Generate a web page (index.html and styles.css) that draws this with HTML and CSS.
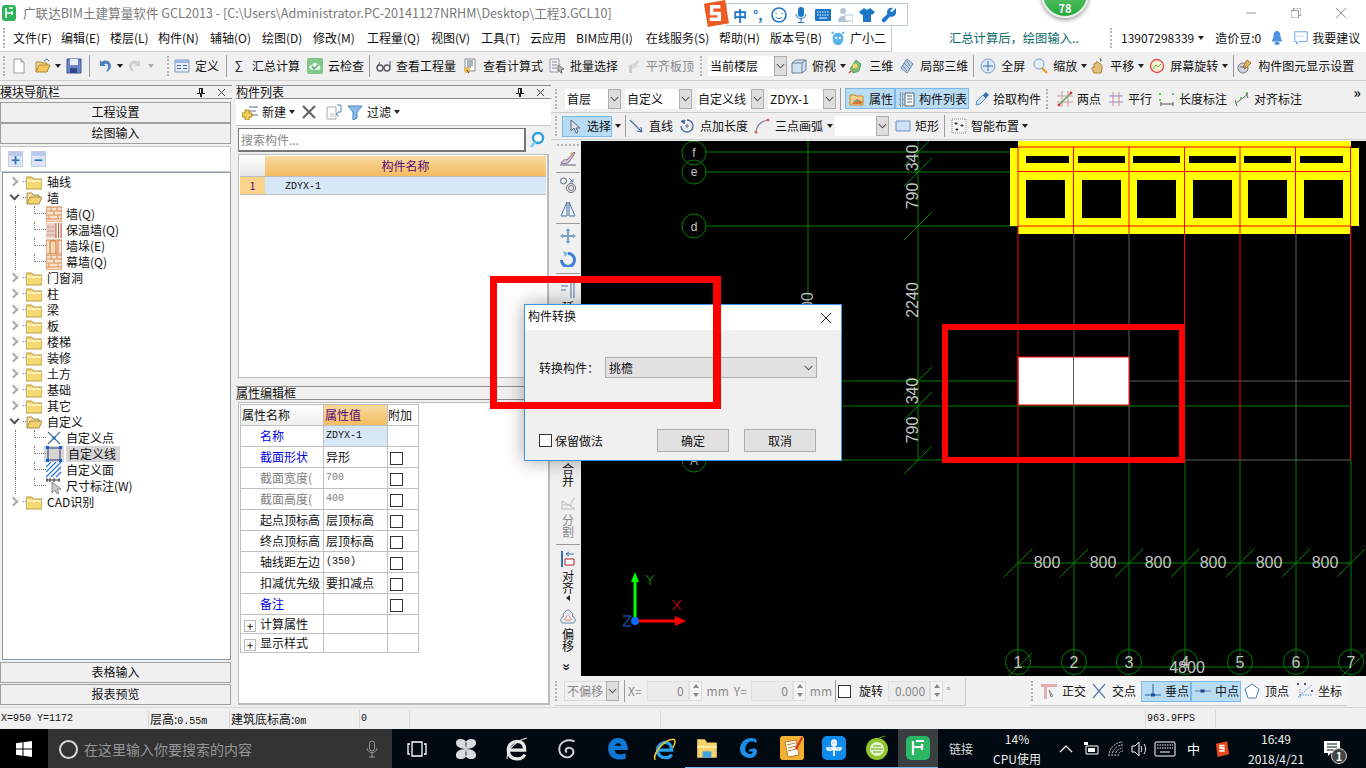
FILE: index.html
```html
<!DOCTYPE html>
<html lang="zh">
<head>
<meta charset="utf-8">
<title>广联达BIM土建算量软件 GCL2013</title>
<link rel="stylesheet" href="styles.css">
</head>
<body>
<svg class="sprite" xmlns="http://www.w3.org/2000/svg">
<symbol id="new" viewBox="0 0 16 16"><path d="M3 1h7l3 3v11H3z" fill="#fff" stroke="#9a9a9a"/><path d="M10 1v3h3" fill="#ddd" stroke="#9a9a9a"/></symbol>
<symbol id="open" viewBox="0 0 16 16"><path d="M1 14V4h5l1 1h5v2" fill="#f0d98a" stroke="#a88a3a"/><path d="M1 14l3-7h11l-3 7z" fill="#f6c55a" stroke="#a88a3a"/><path d="M9 3l3-2 2 2" fill="none" stroke="#3a7ac0"/></symbol>
<symbol id="save" viewBox="0 0 16 16"><path d="M1 1h14v14H1z" fill="#6a86c8" stroke="#3f558f"/><path d="M4 1h8v6H4z" fill="#e8eefa"/><path d="M4 10h7v5H4z" fill="#2f4a8a"/></symbol>
<symbol id="undo" viewBox="0 0 16 16"><path d="M3 2v6h6L7 6c3-1 5 1 4 4l-2 4c5-2 6-6 4-9-2-3-6-3-8-1z" fill="#4a7fc4"/></symbol>
<symbol id="redo" viewBox="0 0 16 16"><path d="M13 2v6H7l2-2c-3-1-5 1-4 4l2 4c-5-2-6-6-4-9 2-3 6-3 8-1z" fill="#cfcfcf"/></symbol>
<symbol id="def" viewBox="0 0 16 16"><path d="M1 2h14v12H1z" fill="#e6eefa" stroke="#7a96c0"/><path d="M1 2h14v3H1z" fill="#9ab6dc"/><path d="M3 7h4v1H3zM3 10h4v1H3zM9 7h4v1H9zM9 10h4v1H9z" fill="#44658f"/></symbol>
<symbol id="cloud" viewBox="0 0 16 16"><rect width="16" height="16" rx="2" fill="#7fc88a"/><path d="M3 11c-2-2 0-4 2-4 1-3 5-3 6 0 3 0 3 4 1 5H4z" fill="#e6f5e8"/><path d="M5 8l2 3 4-4" fill="none" stroke="#5ab26a" stroke-width="1.6"/></symbol>
<symbol id="glass" viewBox="0 0 16 16"><circle cx="5" cy="10" r="3" fill="none" stroke="#556" stroke-width="1.4"/><circle cx="12" cy="10" r="3" fill="none" stroke="#556" stroke-width="1.4"/><path d="M2 9l3-5M15 9V3" stroke="#556" fill="none"/></symbol>
<symbol id="calc" viewBox="0 0 16 16"><path d="M3 1h10v12H3z" fill="#fff" stroke="#889"/><path d="M5 3h6M5 5h6M5 7h6M5 9h4" stroke="#567"/><circle cx="5" cy="12" r="3" fill="#f0b84a"/><path d="M5 12l2 3" stroke="#456"/></symbol>
<symbol id="batch" viewBox="0 0 16 16"><path d="M1 1h9v13H1z" fill="#f4f4f4" stroke="#99a"/><path d="M3 4h5M3 7h5M3 10h5" stroke="#789"/><path d="M9 7l6 4-3 1 1 3-1 0-2-3-1 1z" fill="#bbb" stroke="#777"/></symbol>
<symbol id="flat" viewBox="0 0 16 16"><path d="M2 8l6-3 6 3-6 3z" fill="#ddd"/><path d="M4 15V9l3-2v8zM9 6l4-4 1 2-4 4z" fill="#ccc"/></symbol>
<symbol id="top" viewBox="0 0 16 16"><path d="M1 5l4-3h10v10l-4 3H1z" fill="#cfe0ef" stroke="#6b8299"/><path d="M1 5h10v10M11 5l4-3" fill="none" stroke="#6b8299"/></symbol>
<symbol id="d3" viewBox="0 0 16 16"><path d="M8 2l5 4-2 7-6 2-3-4z" fill="#7fb86e" stroke="#5a7"/><circle cx="7" cy="8" r="2.5" fill="#f1d66a"/><path d="M3 13l-2 2" stroke="#d33" stroke-width="1.5"/></symbol>
<symbol id="d3p" viewBox="0 0 16 16"><path d="M8 1l6 5-6 9-6-5z" fill="#c4d4e8" stroke="#6a86a8"/><path d="M5 5l6 6M8 3l3 5M4 8l4 5" stroke="#6a86a8"/></symbol>
<symbol id="full" viewBox="0 0 16 16"><circle cx="8" cy="8" r="7" fill="#dce8f6" stroke="#7a9bc4"/><path d="M8 3v10M3 8h10" stroke="#3f6fae"/></symbol>
<symbol id="zoom" viewBox="0 0 16 16"><circle cx="7" cy="6" r="5" fill="#e8f0fa" stroke="#7a9bc4"/><path d="M10 10l5 5" stroke="#e0a030" stroke-width="2.4"/></symbol>
<symbol id="pan" viewBox="0 0 16 16"><path d="M5 15c-2-3-3-6-1-6l1 1V6c1-2 2 0 2 0V4c1-1 2 0 2 0l1 1 1 1c1 0 2 1 2 2v3l-1 4z" fill="#e0c07a" stroke="#a88a3a"/><path d="M11 0l2 2-2 2z" fill="#567"/></symbol>
<symbol id="rot" viewBox="0 0 16 16"><circle cx="8" cy="8" r="6.5" fill="#fdf6d0" stroke="#e05050" stroke-width="1.4"/><path d="M4 11l3-4 2 2 3-3" stroke="#5aa860" fill="none"/></symbol>
<symbol id="disp" viewBox="0 0 16 16"><circle cx="6" cy="10" r="5" fill="#cdd6e2" stroke="#778"/><path d="M10 2l4 3-6 6-2-2z" fill="#e6b25a" stroke="#a0752a"/><path d="M3 9h6" stroke="#777"/></symbol>
<symbol id="prop" viewBox="0 0 16 16"><path d="M1 4h5l1 1h7v9H1z" fill="#f6d28a" stroke="#b98a2a"/><path d="M3 13l5-5 6 3-2 2z" fill="#e07030"/><path d="M4 10h8" stroke="#5a9"/></symbol>
<symbol id="list" viewBox="0 0 16 16"><path d="M1 2h3v3H1zM1 7h3v3H1zM1 12h3v3H1z" fill="none" stroke="#567" stroke-dasharray="1 1"/><path d="M6 2h9v13H6z" fill="#fff" stroke="#567"/><path d="M8 5h5M8 8h5M8 11h5" stroke="#567"/></symbol>
<symbol id="pick" viewBox="0 0 16 16"><path d="M2 14l1-4 6-6 3 3-6 6z" fill="#cfe4f5" stroke="#5a88ba"/><path d="M9 4l3-3 3 3-3 3z" fill="#3f6fae"/></symbol>
<symbol id="two" viewBox="0 0 16 16"><path d="M0 5h16M0 11h16M5 0v16M11 0v16" stroke="#c8a0a0" fill="none"/><path d="M2 14L14 2" stroke="#60a060" stroke-width="1.2"/><circle cx="2" cy="14" r="1.4" fill="#d33"/><circle cx="14" cy="2" r="1.4" fill="#d33"/></symbol>
<symbol id="par" viewBox="0 0 16 16"><path d="M1 5h14M1 11h14" stroke="#8a90c8"/><path d="M5 1v14M11 1v14" stroke="#d08a8a"/></symbol>
<symbol id="dim" viewBox="0 0 16 16"><path d="M2 11v4M14 11v4M2 13h12" stroke="#555"/><path d="M0 2h2v2H0zM0 8h2v2H0zM13 2h2v2h-2z" fill="#6bbf6b"/></symbol>
<symbol id="alg" viewBox="0 0 16 16"><path d="M1 13L14 3M3 15L1 9M14 7l-2-5" stroke="#666" fill="none"/><path d="M1 11h2v2H1zM12 1h2v2h-2zM6 6h2v2H6z" fill="#6bbf6b"/></symbol>
<symbol id="sel" viewBox="0 0 16 16"><path d="M5 2v11l3-3 2 5 2-1-2-4h4z" fill="#d9e2ee" stroke="#667"/></symbol>
<symbol id="line" viewBox="0 0 16 16"><path d="M2 2l12 12M14 14l-5-1M14 14l-1-5" stroke="#4d70a4" stroke-width="1.2" fill="none"/></symbol>
<symbol id="ptl" viewBox="0 0 16 16"><path d="M8 2a6 6 0 1 1-6 6" fill="none" stroke="#4f6f9f" stroke-width="1.4"/><path d="M2 3l3 3 1-4zM8 6v4M6 8h4" fill="#4f6f9f" stroke="#4f6f9f"/></symbol>
<symbol id="arc" viewBox="0 0 16 16"><path d="M2 14C3 7 7 3 14 2" fill="none" stroke="#7a8aa0" stroke-width="1.2"/><circle cx="2" cy="14" r="1.6" fill="#e06a5a"/><circle cx="14" cy="2" r="1.6" fill="#e06a5a"/></symbol>
<symbol id="rect" viewBox="0 0 16 16"><path d="M1 3h14v10H1z" fill="#cfe0f7" stroke="#6f8fc8"/></symbol>
<symbol id="smart" viewBox="0 0 16 16"><path d="M1 1h14v14H1z" fill="#f6f6f6" stroke="#8a8a8a" stroke-dasharray="1 1"/><path d="M5 4v3M3.500 5.500h3M11 6v3M9.500 7.500h3M6 10v3M4.500 11.500h3" stroke="#334"/></symbol>
<symbol id="add" viewBox="0 0 16 16"><path d="M7 3h9M7 7h7M7 11h9" stroke="#5a6f90"/><path d="M3 6h4v3h3v4H7v3H3v-3H0V9h3z" fill="#f0d060" stroke="#b08a20"/></symbol>
<symbol id="copy" viewBox="0 0 16 16"><path d="M1 3h9v12H1z" fill="#fff" stroke="#a8a8a8"/><path d="M4 9h6v4H4z" fill="#e2e2e2"/><path d="M11 1h4v7h-3M13 8l-3 2 3 2" fill="none" stroke="#5a86c0"/></symbol>
<symbol id="filter" viewBox="0 0 16 16"><path d="M1 2h14L10 8v6l-4 2V8z" fill="#8fb9e8" stroke="#4a84c4"/></symbol>
<symbol id="find" viewBox="0 0 16 16"><circle cx="9" cy="6" r="5" fill="#fff" stroke="#2f9fdc" stroke-width="2.4"/><path d="M6 10l-4 5" stroke="#8acdf0" stroke-width="3"/></symbol>
<symbol id="fc" viewBox="0 0 16 16"><path d="M0 3h6l1 2h9v10H0z" fill="#f7d774" stroke="#b69a50"/><path d="M1 6h14v2H1z" fill="#fff2b8"/></symbol>
<symbol id="fo" viewBox="0 0 16 16"><path d="M1 14V3h5l1 2h6v2" fill="#f4e1a0" stroke="#a68a4a"/><path d="M1 14l3-7h12l-3 7z" fill="#f6d36a" stroke="#a68a4a"/></symbol>
<symbol id="brick" viewBox="0 0 16 16"><path d="M0 1h16v15H0z" fill="#fbe4cf" stroke="#d07a40"/><path d="M0 5h16M0 9h16M0 13h16M5 1v4M11 1v4M8 5v4M3 9v4M12 9v4" stroke="#d88a55"/></symbol>
<symbol id="ins" viewBox="0 0 16 16"><path d="M0 1h16v15H0z" fill="#eacdc4"/><path d="M10 1h5v15h-5z" fill="#fff"/><path d="M10 1v15M15 1v15M12.500 1v15" stroke="#c05030"/><path d="M1 5h8M1 9h8M1 13h8" stroke="#c9a095"/></symbol>
<symbol id="pier" viewBox="0 0 16 16"><path d="M0 2h16v14H0z" fill="#fbe4cf" stroke="#d07a40"/><path d="M4 3h6v13H4z" fill="#f8d6ae" stroke="#c87030"/><path d="M12 2v14" stroke="#d07a40"/></symbol>
<symbol id="pt" viewBox="0 0 16 16"><path d="M2 2l12 12M14 2L2 14" stroke="#506f9a" stroke-width="1.2"/><rect x="6.500" y="6.500" width="3" height="3" fill="#1f6fd0"/></symbol>
<symbol id="ln" viewBox="0 0 16 16"><path d="M2 2h12v12H2z" fill="none" stroke="#336"/><path d="M0 0h3v3H0zM13 0h3v3h-3zM0 13h3v3H0zM13 13h3v3h-3z" fill="#1260d0"/></symbol>
<symbol id="ar" viewBox="0 0 16 16"><path d="M0 5l5-5M0 10L10 0M0 15L15 0M5 15L15 5M10 15l5-5" stroke="#1f6fe0" stroke-width="1.2"/></symbol>
<symbol id="ms" viewBox="0 0 16 16"><path d="M0 2h14M1 0v4M13 0v4M4 0v4M8 0v4" stroke="#333"/><path d="M6 4v11l3-3 2 4 2-1-2-4h4z" fill="#ccc" stroke="#888"/></symbol>
<symbol id="brush" viewBox="0 0 16 16"><path d="M1 13c2-3 4-4 6-3l7-8 1 1-6 9c-2 2-5 2-8 1z" fill="#d8c8d8" stroke="#8a6a8a"/><path d="M11 3l2 2" stroke="#d0a030" stroke-width="2"/><path d="M0 15h16" stroke="#667"/></symbol>
<symbol id="circ" viewBox="0 0 16 16"><circle cx="3.500" cy="4" r="3" fill="none" stroke="#667"/><circle cx="11" cy="11" r="4.500" fill="none" stroke="#667"/><circle cx="11" cy="11" r="2.500" fill="none" stroke="#667"/><path d="M9 1l4 4M13 2v3h-3" stroke="#4f7fbc" fill="none"/></symbol>
<symbol id="mir" viewBox="0 0 16 16"><path d="M7 1v14H1zM9 1v14h6z" fill="#e6eefa" stroke="#4f6f9f"/></symbol>
<symbol id="mov" viewBox="0 0 16 16"><path d="M8 0l2.500 3H9v4h4V5.500L16 8l-3 2.500V9H9v4h1.500L8 16l-2.500-3H7V9H3v1.500L0 8l3-2.500V7h4V3H5.500z" fill="#7f9fc4"/></symbol>
<symbol id="ro" viewBox="0 0 16 16"><path d="M8 1v3a5 5 0 1 1-5 5H0a8 8 0 1 0 8-8z" fill="#3d7fd0"/><path d="M3 0l5 2-3 4z" fill="#7fb0e6"/></symbol>
<symbol id="ext" viewBox="0 0 16 16"><path d="M1 4h7M1 8h5" stroke="#4a6fa4"/><path d="M11 0v16M14 0v16" stroke="#4a6fa4"/></symbol>
<symbol id="seg" viewBox="0 0 16 16"><path d="M1 14h14L2 6v8M2 10h10" stroke="#bbb" fill="none"/><path d="M9 10l5-8 1 1-5 8z" fill="#ccc"/></symbol>
<symbol id="ali" viewBox="0 0 16 16"><path d="M2 0v16" stroke="#3a6fb8" stroke-width="2"/><path d="M5 8h9v6H5z" fill="#fff" stroke="#b02020"/><path d="M14 3H6M6 3l3-2M6 3l3 2" stroke="#3a6fb8" fill="none"/></symbol>
<symbol id="off" viewBox="0 0 16 16"><path d="M3 14c-3-1-3-5 0-6 0-5 4-7 5-7s5 2 5 7c3 1 3 5 0 6z" fill="#e8eef6" stroke="#6a80a0"/><path d="M5 11c-1-1 0-2 1-2 0-3 4-3 4 0 1 0 2 1 1 2z" fill="#fff" stroke="#e08070"/></symbol>
<symbol id="ort" viewBox="0 0 16 16"><path d="M0 1h16v3H0zM3 4h3v12H3z" fill="#e0b0b0"/><path d="M8 7l4 6-2 1z" fill="#ccc" stroke="#888"/></symbol>
<symbol id="int" viewBox="0 0 16 16"><path d="M2 1l12 14M14 1L2 15" stroke="#5a7ca8" stroke-width="1.2"/></symbol>
<symbol id="per" viewBox="0 0 16 16"><path d="M0 12h16M8 1v11" stroke="#1f5fa0"/><rect x="6" y="10.500" width="4" height="3" fill="#1f4f9a"/></symbol>
<symbol id="mid" viewBox="0 0 16 16"><path d="M0 8h16" stroke="#5a7ca8"/><rect x="5.500" y="6.500" width="4" height="3" fill="#1f3f8a"/></symbol>
<symbol id="ver" viewBox="0 0 16 16"><path d="M8 1l7 5-3 9H4L1 6z" fill="#fff" stroke="#4a80c0"/></symbol>
<symbol id="cor" viewBox="0 0 16 16"><path d="M1 14L15 2M3 15V5M3 12h12" stroke="#4f8fc8" stroke-dasharray="1.500 1"/><path d="M0 0h2v2H0zM7 0h2v2H7zM14 7h2v2h-2z" fill="#558"/></symbol>
<symbol id="pinic" viewBox="0 0 10 11"><path d="M3 1h4v5h2v1H6v3H4V7H1V6h2zM4 2v4h1V2z" fill="#222"/></symbol>
<symbol id="closex" viewBox="0 0 9 9"><path d="M1 1l7 7M8 1L1 8" stroke="#444" fill="none"/></symbol>
<symbol id="chev" viewBox="0 0 10 6"><path d="M1 1l4 4 4-4" stroke="#555" stroke-width="1.2" fill="none"/></symbol>
</svg>

<header class="title">
  <svg class="appic" viewBox="0 0 14 16"><rect width="14" height="16" rx="3" fill="#2fb25a"/><path d="M4 3v10M4 8h6M7 3h4M10 6v4" stroke="#fff" stroke-width="1.6" fill="none"/></svg>
  <span class="ttl">广联达BIM土建算量软件 GCL2013 - [C:\Users\Administrator.PC-20141127NRHM\Desktop\工程3.GCL10]</span>
  <span class="winbtns">
    <svg class="wb" viewBox="0 0 10 10"><path d="M0 5h10" stroke="#999"/></svg>
    <svg class="wb" viewBox="0 0 10 10"><path d="M0 2.500h7.500V10H0zM2.500 2.500V0H10v7.500H7.500" stroke="#999" fill="none"/></svg>
    <svg class="wb" viewBox="0 0 10 10"><path d="M0 0l10 10M10 0L0 10" stroke="#999"/></svg>
  </span>
</header>

<nav class="menu">
  <div class="menuleft">
    <span class="gripv"></span>
    <span class="m w48">文件(F)</span><span class="m w49">编辑(E)</span><span class="m w48">楼层(L)</span><span class="m w52">构件(N)</span><span class="m w52">辅轴(O)</span><span class="m w51">绘图(D)</span><span class="m w54">修改(M)</span><span class="m w64">工程量(Q)</span><span class="m w50">视图(V)</span><span class="m w49">工具(T)</span><span class="m w46">云应用</span><span class="m w70">BIM应用(I)</span><span class="m w73">在线服务(S)</span><span class="m w51">帮助(H)</span><span class="m w60">版本号(B)</span>
    <svg class="ic16" viewBox="0 0 16 18"><path d="M2 9c0-8 12-8 12 0 0 5-2 8-6 8S2 14 2 9z" fill="#5ab4ec"/><path d="M3 4L1 2M13 4l2-2" stroke="#5ab4ec" stroke-width="2"/><circle cx="6" cy="9" r="1.300" fill="#fff"/><circle cx="10" cy="9" r="1.300" fill="#fff"/></svg>
    <span class="m gxe">广小二</span>
  </div>
  <span class="tip">汇总计算后，绘图输入..</span>
  <div class="menuright">
    <span class="gripv"></span>
    <span class="m phone">13907298339</span><i class="dn"></i>
    <span class="m bean">造价豆:0</span>
    <svg class="ic16 bell" viewBox="0 0 16 18"><path d="M8 1c-3 0-4 3-4 6 0 3-2 5-2 6h12c0-1-2-3-2-6 0-3-1-6-4-6z" fill="#4f94e0"/><ellipse cx="8" cy="15" rx="3" ry="2" fill="#4f94e0"/></svg>
    <svg class="ic16 sug" viewBox="0 0 16 18"><path d="M1 2h14v11H6l-3 3v-3H1z" fill="#fff" stroke="#5a9be0"/><path d="M4 7h1M7 7h1M10 7h1" stroke="#5a9be0"/></svg>
    <span class="m">我要建议</span>
  </div>
</nav>

<div class="tb1">
  <span class="gripv g1"></span>
  <svg class="ic16 a1"><use href="#new"/></svg>
  <svg class="ic16 a2"><use href="#open"/></svg><i class="dn a3"></i>
  <svg class="ic16 a4"><use href="#save"/></svg>
  <span class="vsep a5"></span>
  <svg class="ic16 a6"><use href="#undo"/></svg><i class="dn a3"></i>
  <svg class="ic16 a3"><use href="#redo"/></svg><i class="dn dim a7"></i>
  <span class="gripv a8"></span>
  <span class="it a9"><svg class="ic16"><use href="#def"/></svg>定义</span>
  <span class="vsep s7"></span>
  <span class="it s4"><b class="sigma">Σ</b>汇总计算</span>
  <span class="it s7"><svg class="ic16"><use href="#cloud"/></svg>云检查</span>
  <span class="vsep s5"></span>
  <span class="it s5"><svg class="ic16"><use href="#glass"/></svg>查看工程量</span>
  <span class="it s6"><svg class="ic16"><use href="#calc"/></svg>查看计算式</span>
  <span class="it s6"><svg class="ic16"><use href="#batch"/></svg>批量选择</span>
  <span class="it s7 dis"><svg class="ic16"><use href="#flat"/></svg>平齐板顶</span>
  <span class="gripv s6"></span>
  <span class="combo c79 s6"><span class="cv">当前楼层</span><span class="cb"><svg class="chev"><use href="#chev"/></svg></span></span>
  <span class="it s4"><svg class="ic16"><use href="#top"/></svg>俯视<i class="dn"></i></span>
  <span class="it s2"><svg class="ic16"><use href="#d3"/></svg>三维</span>
  <span class="it s6"><svg class="ic16"><use href="#d3p"/></svg>局部三维</span>
  <span class="vsep s5"></span>
  <span class="it s6"><svg class="ic16"><use href="#full"/></svg>全屏</span>
  <span class="it s7"><svg class="ic16"><use href="#zoom"/></svg>缩放<i class="dn"></i></span>
  <span class="it s2"><svg class="ic16"><use href="#pan"/></svg>平移<i class="dn"></i></span>
  <span class="it s5"><svg class="ic16"><use href="#rot"/></svg>屏幕旋转<i class="dn"></i></span>
  <span class="vsep s5"></span>
  <span class="it s3"><svg class="ic16"><use href="#disp"/></svg>构件图元显示设置</span>
</div>

<main class="main">
  <aside class="left">
    <div class="phead"><span>模块导航栏</span><span class="phbtn"><svg class="pin"><use href="#pinic"/></svg><svg class="cx"><use href="#closex"/></svg></span></div>
    <button class="nav first">工程设置</button>
    <button class="nav">绘图输入</button>
    <div class="plusbar"><span class="pbtn">+</span><span class="pbtn">−</span></div>
    <ul class="tree">
      <li><i class="ar"></i><span class="dots"></span><svg class="ic16"><use href="#fc"/></svg><span>轴线</span></li>
      <li><i class="ar open"></i><span class="dots"></span><svg class="ic16"><use href="#fo"/></svg><span>墙</span></li>
      <li class="sub"><span class="dots"></span><svg class="ic16"><use href="#brick"/></svg><span>墙(Q)</span></li>
      <li class="sub"><span class="dots"></span><svg class="ic16"><use href="#ins"/></svg><span>保温墙(Q)</span></li>
      <li class="sub"><span class="dots"></span><svg class="ic16"><use href="#pier"/></svg><span>墙垛(E)</span></li>
      <li class="sub"><span class="dots"></span><svg class="ic16"><use href="#brick"/></svg><span>幕墙(Q)</span></li>
      <li><i class="ar"></i><span class="dots"></span><svg class="ic16"><use href="#fc"/></svg><span>门窗洞</span></li>
      <li><i class="ar"></i><span class="dots"></span><svg class="ic16"><use href="#fc"/></svg><span>柱</span></li>
      <li><i class="ar"></i><span class="dots"></span><svg class="ic16"><use href="#fc"/></svg><span>梁</span></li>
      <li><i class="ar"></i><span class="dots"></span><svg class="ic16"><use href="#fc"/></svg><span>板</span></li>
      <li><i class="ar"></i><span class="dots"></span><svg class="ic16"><use href="#fc"/></svg><span>楼梯</span></li>
      <li><i class="ar"></i><span class="dots"></span><svg class="ic16"><use href="#fc"/></svg><span>装修</span></li>
      <li><i class="ar"></i><span class="dots"></span><svg class="ic16"><use href="#fc"/></svg><span>土方</span></li>
      <li><i class="ar"></i><span class="dots"></span><svg class="ic16"><use href="#fc"/></svg><span>基础</span></li>
      <li><i class="ar"></i><span class="dots"></span><svg class="ic16"><use href="#fc"/></svg><span>其它</span></li>
      <li><i class="ar open"></i><span class="dots"></span><svg class="ic16"><use href="#fo"/></svg><span>自定义</span></li>
      <li class="sub"><span class="dots"></span><svg class="ic16"><use href="#pt"/></svg><span>自定义点</span></li>
      <li class="sub"><span class="dots"></span><svg class="ic16 selic"><use href="#ln"/></svg><span class="seltxt">自定义线</span></li>
      <li class="sub"><span class="dots"></span><svg class="ic16"><use href="#ar"/></svg><span>自定义面</span></li>
      <li class="sub"><span class="dots"></span><svg class="ic16"><use href="#ms"/></svg><span>尺寸标注(W)</span></li>
      <li><i class="ar"></i><span class="dots"></span><svg class="ic16"><use href="#fc"/></svg><span>CAD识别</span></li>
    </ul>
    <button class="nav low">表格输入</button>
    <button class="nav">报表预览</button>
  </aside>

  <section class="mid">
    <div class="phead"><span>构件列表</span><span class="phbtn"><svg class="pin"><use href="#pinic"/></svg><svg class="cx"><use href="#closex"/></svg></span></div>
    <div class="mtools">
      <span class="it"><svg class="ic16"><use href="#add"/></svg>新建<i class="dn"></i></span>
      <svg class="delx" viewBox="0 0 14 14"><path d="M1 1l12 12M13 1L1 13" stroke="#666" stroke-width="2.200"/></svg>
      <svg class="ic16 cpy"><use href="#copy"/></svg>
      <span class="it flt"><svg class="ic16"><use href="#filter"/></svg>过滤<i class="dn"></i></span>
    </div>
    <div class="search"><input class="sinput" type="text" placeholder="搜索构件..."><svg class="ic16 sfind"><use href="#find"/></svg></div>
    <div class="listpanel">
      <div class="lrow lhead"><span class="lnum"></span><span class="lname">构件名称</span></div>
      <div class="lrow lbody"><span class="lnum on">1</span><span class="lname on mono">ZDYX-1</span></div>
    </div>
    <div class="phead second"><span>属性编辑框</span><span class="phbtn"><svg class="pin"><use href="#pinic"/></svg></span></div>
    <div class="proppanel">
      <table class="props">
        <tr class="ph"><th>属性名称</th><th class="hv">属性值</th><th class="ha">附加</th></tr>
        <tr class="blue"><td>名称</td><td class="val sel mono">ZDYX-1</td><td></td></tr>
        <tr class="blue"><td>截面形状</td><td class="val">异形</td><td><i class="chk"></i></td></tr>
        <tr class="gray"><td>截面宽度(</td><td class="val mono">700</td><td><i class="chk"></i></td></tr>
        <tr class="gray"><td>截面高度(</td><td class="val mono">400</td><td><i class="chk"></i></td></tr>
        <tr><td>起点顶标高</td><td class="val">层顶标高</td><td><i class="chk"></i></td></tr>
        <tr><td>终点顶标高</td><td class="val">层顶标高</td><td><i class="chk"></i></td></tr>
        <tr><td>轴线距左边</td><td class="val mono">(350)</td><td><i class="chk"></i></td></tr>
        <tr><td>扣减优先级</td><td class="val">要扣减点</td><td><i class="chk"></i></td></tr>
        <tr class="blue"><td>备注</td><td></td><td><i class="chk"></i></td></tr>
        <tr class="grp"><td><i class="exp">+</i>计算属性</td><td></td><td></td></tr>
        <tr class="grp"><td><i class="exp">+</i>显示样式</td><td></td><td></td></tr>
      </table>
    </div>
  </section>

  <section class="right">
    <div class="tb2">
      <span class="gripv"></span>
      <span class="combo c56"><span class="cv">首层</span><span class="cb"><svg class="chev"><use href="#chev"/></svg></span></span>
      <span class="combo c67"><span class="cv">自定义</span><span class="cb"><svg class="chev"><use href="#chev"/></svg></span></span>
      <span class="combo c68"><span class="cv">自定义线</span><span class="cb"><svg class="chev"><use href="#chev"/></svg></span></span>
      <span class="combo c68"><span class="cv">ZDYX-1</span><span class="cb"><svg class="chev"><use href="#chev"/></svg></span></span>
      <span class="vsep"></span>
      <span class="it act b50"><svg class="ic16"><use href="#prop"/></svg>属性</span>
      <span class="it act b74"><svg class="ic16"><use href="#list"/></svg>构件列表</span>
      <span class="it pk"><svg class="ic16"><use href="#pick"/></svg>拾取构件</span>
      <span class="gripv gs"></span>
      <span class="it t1"><svg class="ic16"><use href="#two"/></svg>两点</span>
      <span class="it t2"><svg class="ic16"><use href="#par"/></svg>平行</span>
      <span class="it t2"><svg class="ic16"><use href="#dim"/></svg>长度标注</span>
      <span class="it t2"><svg class="ic16"><use href="#alg"/></svg>对齐标注</span>
      <span class="more">»</span>
    </div>
    <div class="tb3">
      <span class="gripv"></span>
      <span class="it act sel1"><svg class="ic16"><use href="#sel"/></svg>选择</span><i class="dn d1"></i>
      <span class="vsep v1"></span>
      <span class="it l1"><svg class="ic16"><use href="#line"/></svg>直线</span>
      <span class="it l2"><svg class="ic16"><use href="#ptl"/></svg>点加长度</span>
      <span class="it l2"><svg class="ic16"><use href="#arc"/></svg>三点画弧<i class="dn"></i></span>
      <span class="combo c54 l4"><span class="cv"></span><span class="cb"><svg class="chev"><use href="#chev"/></svg></span></span>
      <span class="it l3"><svg class="ic16"><use href="#rect"/></svg>矩形</span>
      <span class="vsep v2"></span>
      <span class="it l3"><svg class="ic16"><use href="#smart"/></svg>智能布置<i class="dn"></i></span>
    </div>
    <div class="work">
      <div class="vtools">
        <span class="griph"></span>
        <svg class="ic16 vi"><use href="#brush"/></svg>
        <span class="hsep"></span>
        <svg class="ic16 vi"><use href="#circ"/></svg>
        <svg class="ic16 vi v8"><use href="#mir"/></svg>
        <span class="hsep"></span>
        <svg class="ic16 vi"><use href="#mov"/></svg>
        <svg class="ic16 vi v7"><use href="#ro"/></svg>
        <span class="hsep"></span>
        <svg class="ic16 vi v8"><use href="#ext"/></svg>
        <span class="vt">延<br>伸</span>
        <span class="vgap"></span>
        <span class="vt">合<br>并</span>
        <svg class="ic16 vi v8"><use href="#seg"/></svg>
        <span class="vt dis">分<br>割</span>
        <span class="hsep"></span>
        <svg class="ic16 vi v6"><use href="#ali"/></svg>
        <span class="vt">对<br>齐</span>
        <i class="lft"></i>
        <svg class="ic16 vi v8"><use href="#off"/></svg>
        <span class="vt">偏<br>移</span>
        <span class="mored">»</span>
      </div>
      <svg class="cad" viewBox="581 141 785 535" xmlns="http://www.w3.org/2000/svg">
        <g class="gl">
          <path d="M706 152H1018M706 172H1018M706 226H1018M842 381H1018M842 406H1351M581 460H1018M808 141V304M918 141V460"/>
          <path d="M1018 460V665M1074 460V665M1129 460V665M1185 460V665M1240 460V665M1296 460V665M1351 460V665M1018 563H1351M1018 667H1351"/>
          <path d="M904 166L932 138M904 186L932 158M904 240L932 212M904 395L932 367M904 420L932 392M904 474L932 446"/>
          <path d="M1004 577L1032 549M1060 577L1088 549M1115 577L1143 549M1171 577L1199 549M1226 577L1254 549M1282 577L1310 549M1337 577L1365 549M1004 681L1032 653M1337 681L1365 653"/>
          <circle cx="694" cy="153" r="12"/><circle cx="694" cy="172" r="12"/><circle cx="694" cy="226" r="12"/><circle cx="694" cy="460" r="12"/>
          <circle cx="1018" cy="662" r="12.500"/><circle cx="1074" cy="662" r="12.500"/><circle cx="1129" cy="662" r="12.500"/><circle cx="1185" cy="662" r="12.500"/><circle cx="1240" cy="662" r="12.500"/><circle cx="1296" cy="662" r="12.500"/><circle cx="1351" cy="662" r="12.500"/>
        </g>
        <path class="yl" d="M1018 141H1351V148H1359V226H1351V234H1018V226H1010V148H1018Z"/>
        <path class="bk" d="M1026 156h43v7h-43zM1078 156h47v7h-47zM1133 156h47v7h-47zM1189 156h47v7h-47zM1244 156h47v7h-47zM1300 156h43v7h-43zM1026 180h39v38h-39zM1082 180h39v38h-39zM1137 180h39v38h-39zM1193 180h39v38h-39zM1248 180h39v38h-39zM1304 180h39v38h-39z"/>
        <path class="dk" d="M1074 234V460M1129 234V460M1296 234V460M1018 381H1351M1018 460H1351"/>
        <rect class="wh" x="1018" y="357" width="111" height="48"/>
        <path class="dk" d="M1073.500 357V405"/>
        <path class="rd" d="M1018 147H1351M1018 171.500H1351M1018 226H1351M1018 147V460M1073.500 147V234M1129 147V234M1184.500 147V460M1240 147V460M1295.500 147V234M1350.500 147V460"/>
        <g class="tg"><text x="694" y="157">f</text><text x="694" y="176">e</text><text x="694" y="231">d</text><text x="694" y="465">A</text></g>
        <g class="dl">
          <text transform="translate(918 158) rotate(-90)">340</text>
          <text transform="translate(918 196) rotate(-90)">790</text>
          <text transform="translate(918 300) rotate(-90)">2240</text>
          <text transform="translate(918 391) rotate(-90)">340</text>
          <text transform="translate(918 430) rotate(-90)">790</text>
          <text transform="translate(813 310) rotate(-90)">3600</text>
          <text x="1047" y="568">800</text><text x="1103" y="568">800</text><text x="1158" y="568">800</text><text x="1213" y="568">800</text><text x="1269" y="568">800</text><text x="1325" y="568">800</text>
          <text x="1187" y="673">4800</text>
          <text x="1018" y="668">1</text><text x="1074" y="668">2</text><text x="1129" y="668">3</text><text x="1185" y="668">4</text><text x="1240" y="668">5</text><text x="1296" y="668">6</text><text x="1351" y="668">7</text>
        </g>
        <path class="gr2" d="M635 621V580"/><path class="grf" d="M635 572l-4 10h8z"/>
        <path class="rd2" d="M635 621H675"/><path class="rdf" d="M686 621l-11-5v10z"/>
        <circle class="bl" cx="635" cy="621" r="4"/>
        <path class="rdt" d="M673 600l8 10M681 600l-8 10"/>
        <path class="grt" d="M646 575l4 5 4-5M650 580v5"/>
        <path class="blt" d="M623 616h8l-8 10h8"/>
      </svg>
    </div>
    <div class="tbb">
      <div class="tbbl">
        <span class="gripv"></span>
        <span class="combo c55 dis"><span class="cv">不偏移</span><span class="cb"><svg class="chev"><use href="#chev"/></svg></span></span>
        <span class="vsep x5"></span>
        <span class="lab dis x3">X=</span>
        <span class="num x5">0</span><span class="spin"><i></i><i></i></span>
        <span class="lab dis x5">mm</span>
        <span class="lab dis x5">Y=</span>
        <span class="num x4">0</span><span class="spin"><i></i><i></i></span>
        <span class="lab dis x4">mm</span>
        <span class="vsep x3"></span>
        <i class="chk x2"></i>
        <span class="lab x8">旋转</span>
        <span class="num x5">0.000</span><span class="spin"><i></i><i></i></span>
        <span class="lab dis x3">°</span>
      </div>
      <div class="tbbr">
        <span class="gripv"></span>
        <span class="it r1"><svg class="ic16"><use href="#ort"/></svg>正交</span>
        <span class="it r5"><svg class="ic16"><use href="#int"/></svg>交点</span>
        <span class="it act r3 r3a"><svg class="ic16"><use href="#per"/></svg>垂点</span>
        <span class="it act r3"><svg class="ic16"><use href="#mid"/></svg>中点</span>
        <span class="it r2 r2a"><svg class="ic16"><use href="#ver"/></svg>顶点</span>
        <span class="it r2"><svg class="ic16"><use href="#cor"/></svg>坐标</span>
      </div>
    </div>
  </section>
</main>

<footer class="status">
  <span class="st s148 mono">X=950 Y=1172</span>
  <span class="st s80">层高:<span class="mono">0.55m</span></span>
  <span class="st s130">建筑底标高:<span class="mono">0m</span></span>
  <span class="st s50 mono">0</span>
  <span class="st s251"></span>
  <span class="st s485"></span>
  <span class="st s70 mono">963.9FPS</span>
</footer>

<div class="taskbar">
  <span class="start"><svg class="win" viewBox="0 0 16 16"><path d="M0 2.300l6.500-1v6.200H0zM7.500 1.200L16 0v7.500H7.500zM0 8.500h6.500v6.200L0 13.700zM7.500 8.500H16V16l-8.500-1.200z" fill="#fff"/></svg></span>
  <span class="tsearch">
    <i class="ring"></i>
    <span class="stext">在这里输入你要搜索的内容</span>
    <svg class="mic" viewBox="0 0 12 18"><rect x="3.500" y="1" width="5" height="10" rx="2.500" fill="none" stroke="#999"/><path d="M1 8c0 6 10 6 10 0M6 13v4M3 17h6" fill="none" stroke="#999"/></svg>
  </span>
  <span class="tk tv"><svg class="t20" viewBox="0 0 20 20"><path d="M5 3h10v14H5zM3 5H1v10h2M17 5h2v10h-2" fill="none" stroke="#fff" stroke-width="1.300"/></svg></span>
  <span class="tk t50"><svg class="t22" viewBox="0 0 22 22"><path d="M11 11C4 11 1 8 2 4c1-3 7-3 9 0 1 2 0 5 0 7zM11 11c7 0 10-3 9-7-1-3-7-3-9 0-1 2 0 5 0 7zM11 11c-7 0-10 3-9 7 1 3 7 3 9 0 1-2 0-5 0-7zM11 11c7 0 10 3 9 7-1 3-7 3-9 0-1-2 0-5 0-7z" fill="#d8dcde"/></svg></span>
  <span class="tk t52"><svg class="t22" viewBox="0 0 22 22"><path d="M4 12h14c0-6-3-8-7-8s-8 3-8 8 3 8 8 8c3 0 6-1 7-4" fill="none" stroke="#e8e8e8" stroke-width="3"/><path d="M2 20C1 14 8 4 20 1" fill="none" stroke="#e8e8e8"/></svg></span>
  <span class="tk t50"><svg class="t22" viewBox="0 0 22 22"><path d="M17 4C10 1 3 5 3 11s6 9 10 7 4-7 0-8-5 3-3 4" fill="none" stroke="#cfd3d6" stroke-width="1.800"/></svg></span>
  <span class="tk t50"><svg class="t22" viewBox="0 0 22 22"><path d="M2 11C2 5 6 1 11 1c6 0 9 4 9 11H8c0 4 5 5 10 3v5c-7 2-16 0-16-9zM8 8h6c0-3-5-3-6 0z" fill="#0f78d4"/></svg></span>
  <span class="tk t42"><svg class="t22" viewBox="0 0 22 22"><path d="M5 12h13c0-5-3-7-6-7s-7 3-7 7 3 7 7 7c3 0 5-1 6-3" fill="none" stroke="#2a9fe8" stroke-width="3"/><path d="M3 21C0 17 10 2 20 2c2 1 1 5-1 8" fill="none" stroke="#f0c430" stroke-width="1.400"/></svg></span>
  <span class="tk t43 run"><svg class="t22" viewBox="0 0 22 22"><path d="M2 3h7l2 3h9v14H2z" fill="#f5d26a"/><path d="M2 9h18v2H2z" fill="#fbeaa8"/><path d="M7 14h8v6H7z" fill="#3fa5e0"/></svg></span>
  <span class="tk t42 run"><svg class="t26" viewBox="0 0 26 26"><path d="M20 4C12 1 4 6 4 14c0 7 8 11 14 8 3-2 4-6 2-8-2-1-7 0-8 2 2 1 4 0 5 1-1 2-4 3-6 1-3-2-2-8 2-11 3-1 6 0 8 1z" fill="#1e8fe8"/></svg></span>
  <span class="tk t43 run"><svg class="t26" viewBox="0 0 26 26"><rect x="1" y="1" width="24" height="24" rx="3" fill="#f2b035"/><path d="M6 7l11-2 3 15-11 2z" fill="#fff" stroke="#c07a20"/><path d="M8 10l8-2M9 13l8-2M9 16l8-2" stroke="#c07a20"/><path d="M16 13l6-11 2 1-6 12z" fill="#d04020"/></svg></span>
  <span class="tk t42 run"><svg class="t26" viewBox="0 0 26 26"><rect x="1" y="1" width="24" height="24" rx="5" fill="#0f8cec"/><path d="M13 5v16M13 5c3 0 3 6 0 6-3 0-3-6 0-6zM6 13h14c0 3-5 3-7 0-2 3-7 3-7 0z" fill="none" stroke="#fff" stroke-width="1.700"/></svg></span>
  <span class="tk t43 run"><svg class="t26" viewBox="0 0 26 26"><circle cx="13" cy="14" r="11" fill="#8fc62e"/><circle cx="13" cy="14" r="7" fill="#e8f4d0"/><path d="M7 14h12M9 11h8M9 17h8" stroke="#58a010"/><path d="M15 3l6-2" stroke="#58a010"/></svg></span>
  <span class="tk t40 run active"><svg class="t26" viewBox="0 0 26 26"><rect x="1" y="1" width="24" height="24" rx="5" fill="#2bb764"/><path d="M8 6v14M8 12h9M11 6h8M17 9v6" stroke="#fff" stroke-width="2.200" fill="none"/></svg></span>
  <span class="tlink">链接</span>
  <span class="tcpu"><span>14%</span><span>CPU使用</span></span>
  <span class="tray">
    <svg class="tr1" viewBox="0 0 14 8"><path d="M1 7l6-6 6 6" fill="none" stroke="#fff" stroke-width="1.200"/></svg>
    <svg class="tr2" viewBox="0 0 16 14"><path d="M3 4h12v8H3z" fill="none" stroke="#fff"/><path d="M5 6h7v4H5z" fill="#fff"/><path d="M1 0h4v3H1z" fill="#fff"/></svg>
    <svg class="tr3" viewBox="0 0 16 16"><path d="M1 15a14 14 0 0 1 14-14M4 15A11 11 0 0 1 15 4M7 15a8 8 0 0 1 8-8M10 15a5 5 0 0 1 5-5" fill="none" stroke="#ccc" stroke-dasharray="2 1"/></svg>
    <svg class="tr4" viewBox="0 0 16 16"><path d="M1 5h3l4-4v14l-4-4H1z" fill="none" stroke="#fff"/><path d="M10 5c1 2 1 4 0 6M13 3c2 3 2 7 0 10" fill="none" stroke="#fff"/></svg>
    <svg class="tr5" viewBox="0 0 22 16"><rect x="1" y="1" width="20" height="14" rx="1" fill="none" stroke="#fff"/><path d="M3 4h16M3 7h16" stroke="#fff" stroke-dasharray="1.500 1"/><path d="M6 11h10" stroke="#fff"/></svg>
    <span class="tzh">中</span>
    <svg class="tr6" viewBox="0 0 16 18"><path d="M1 3l13-3 2 15-13 3z" fill="#e8471c"/><path d="M11 5H6v3h4v3H5" fill="none" stroke="#fff" stroke-width="2"/></svg>
  </span>
  <span class="clock"><span>16:49</span><span>2018/4/21</span></span>
  <span class="notif"><svg class="tr7" viewBox="0 0 16 16"><path d="M0 0h16v12H7l-3 3v-3H0z" fill="#fff"/><path d="M3 3h10M3 6h10M3 9h7" stroke="#000a10"/></svg><b class="nbadge">1</b></span>
</div>

<aside class="sogou">
  <svg class="slogo" viewBox="0 0 28 28"><path d="M2 4l22-4 4 24-22 4z" fill="#ee5a24"/><path d="M19 7H10v7h8v6H8" fill="none" stroke="#fff" stroke-width="3.500"/></svg>
  <span class="sbar">
    <b class="szh">中</b><b class="sq">°,</b>
    <svg class="s20" viewBox="0 0 16 16"><circle cx="8" cy="8" r="7" fill="none" stroke="#1b75c9" stroke-width="1.600"/><path d="M5 6v1M11 6v1M5 10c1 2 5 2 6 0" stroke="#1b75c9" fill="none"/></svg>
    <svg class="s20" viewBox="0 0 16 16"><rect x="5" y="0" width="6" height="10" rx="3" fill="#1b75c9"/><path d="M3 7c0 6 10 6 10 0M8 12v3M5 15.500h6" stroke="#1b75c9" fill="none"/></svg>
    <svg class="s20" viewBox="0 0 16 16"><rect y="2" width="16" height="12" rx="1" fill="#1b75c9"/><path d="M2 5h12M2 8h12" stroke="#fff" stroke-dasharray="1.500 1"/><path d="M4 11h8" stroke="#fff"/></svg>
    <svg class="s20" viewBox="0 0 16 16"><circle cx="6" cy="4" r="3" fill="#b4c3d3"/><path d="M1 15c0-8 10-8 10 0z" fill="#b4c3d3"/><rect x="8" y="8" width="8" height="6" fill="#fff" stroke="#b4c3d3"/></svg>
    <svg class="s20" viewBox="0 0 16 16"><path d="M5 1l3 2 3-2 5 4-3 3-1-1v8H4V7L3 8 0 5z" fill="#1b75c9"/></svg>
    <svg class="s20" viewBox="0 0 16 16"><path d="M15 1l-4 4-2-1 3-3c-3-1-6 1-6 4 0 1 0 1 .500 2L1 12c-1 2 1 4 3 3l5-5.500c3 1 6-1 6-4z" fill="#1b75c9"/></svg>
  </span>
</aside>

<div class="badge"><span>78</span></div>

<section class="dialog">
  <div class="dtitle"><span>构件转换</span><svg class="dx" viewBox="0 0 12 12"><path d="M1 1l10 10M11 1L1 11" stroke="#222" fill="none"/></svg></div>
  <div class="dbody">
    <div class="drow"><span class="dlab">转换构件：</span><span class="dsel"><span>挑檐</span><svg class="chev"><use href="#chev"/></svg></span></div>
    <div class="dfoot"><i class="chk"></i><span class="dkeep">保留做法</span><button class="dbtn b1">确定</button><button class="dbtn b2">取消</button></div>
  </div>
</section>

<div class="mark mark1"></div>
<div class="mark mark2"></div>
</body>
</html>
```
FILE: styles.css
```css
*{box-sizing:border-box}
html,body{margin:0;padding:0;width:1366px;height:768px;overflow:hidden}
body{font-family:"Noto Sans CJK SC","Liberation Sans",sans-serif;font-size:12px;line-height:16px;color:#111;background:#f0f0f0;position:relative}
.sprite{position:absolute;width:0;height:0}
i{font-style:normal;display:inline-block}
svg{flex:none;display:block}
.ic16{width:16px;height:16px}
.mono{font-family:"Liberation Mono","Noto Sans CJK SC",monospace;font-size:10px}

/* title */
.title{height:25px;background:#fff;display:flex;align-items:center;padding-left:2px;color:#7a7a7a}
.appic{width:14px;height:16px;margin-right:7px}
.ttl{font-size:12.6px;white-space:nowrap}
.winbtns{margin-left:auto;display:flex;align-items:center;margin-right:20px;gap:35px}
.wb{width:10px;height:10px}

/* menu */
.menu{height:27px;background:#fff;display:flex;align-items:center;border-bottom:1px solid #fff}
.menuleft{width:892px;height:27px;display:flex;align-items:center;border-right:1px solid #ccc;border-bottom:1px solid #ccc;padding-left:3px}
.gripv{display:block;flex:none;width:2px;height:20px;border-left:2px dotted #b4b4b4}
.m{white-space:nowrap;flex:none}
.menuleft .gripv{margin-right:8px}
.w46{width:46px}.w48{width:48px}.w49{width:49px}.w50{width:50px}.w51{width:51px}.w52{width:52px}.w54{width:54px}.w60{width:60px}.w64{width:64px}.w70{width:70px}.w73{width:73px}
.gxe{margin-left:4px}
.tip{width:217px;padding-left:57px;color:#0c6b66;white-space:nowrap;font-size:12.3px}
.menuright{display:flex;align-items:center;height:27px;flex:1;padding-left:1px}
.phone{margin-left:9px}
.dn{width:0;height:0;border-left:3.5px solid transparent;border-right:3.5px solid transparent;border-top:4px solid #222;margin-left:4px;flex:none}
.dn.dim{border-top-color:#aaa}
.it .dn{margin-left:-1px}
.bean{margin-left:11px}
.bell{margin-left:8px}
.sug{margin-left:8px;margin-right:3px}

/* toolbars */
.tb1{height:29px;display:flex;align-items:center;background:#f0f0f0;border-bottom:1px solid #d0d0d0;padding-left:3px}
.it{display:inline-flex;align-items:center;gap:5px;white-space:nowrap;flex:none}
.vsep{display:block;flex:none;width:1px;height:22px;background:#9a9a9a}
.g1{margin-right:6px}
.a1{margin-left:0}.a2{margin-left:8px}.a3{margin-left:4px}.a4{margin-left:5px}.a5{margin-left:7px}.a6{margin-left:7px}.a7{margin-left:5px}.a8{margin-left:13px}.a9{margin-left:5px}
.s2{margin-left:2px}.s3{margin-left:3px}.s4{margin-left:4px}.s5{margin-left:5px}.s6{margin-left:6px}.s7{margin-left:7px}
.sigma{width:16px;font-weight:400;text-align:center;font-size:14px;color:#333}
.dis{color:#8a8a8a}
.combo{display:inline-flex;height:20px;flex:none}
.cv{flex:1;background:#fff;padding-left:2px;line-height:20px;white-space:nowrap;overflow:hidden}
.cb{width:13px;background:#ddd;border:1px solid #adadad;display:flex;align-items:center;justify-content:center}
.chev{width:9px;height:6px}
.c79{width:79px}.c56{width:56px}.c67{width:67px}.c68{width:68px}.c54{width:54px}.c55{width:55px}

/* main */
.main{height:626px;display:flex;background:#f0f0f0}
.left{width:232px;padding:4px 0 2px;display:flex;flex-direction:column;flex:none}
.mid{width:315px;margin-left:4px;padding-top:4px;display:flex;flex-direction:column;flex:none}
.right{flex:1;display:flex;flex-direction:column;min-width:0}
.phead{height:14px;display:flex;align-items:center;justify-content:space-between;border-top:1px solid #8c8c8c;border-bottom:1px solid #8c8c8c;line-height:12px;flex:none;background:#f0f0f0}
.phbtn{display:flex;align-items:center;gap:11px;padding-right:6px}
.pin{width:10px;height:11px}
.cx{width:9px;height:9px}
.nav{height:21px;width:231px;padding:0 0 2px;background:#f0f0f0;border:1px solid #a0a0a0;font:inherit;color:#111;flex:none;line-height:16px}
.nav.first{margin-top:3px}
.nav.low{margin-top:2px;margin-bottom:1px}
.plusbar{height:26px;margin-top:2px;margin-right:1px;border:1px solid #c8c8c8;background:#fff;display:flex;gap:8px;padding:4px 7px;flex:none}
.pbtn{width:15px;height:16px;background:linear-gradient(#bcc8ea 0 30%,#dce4f5 30%);border:1px solid #c2cdeb;color:#2a70b8;font-weight:700;text-align:center;line-height:15px;font-size:15px}
.tree{list-style:none;margin:0 1px 0 2px;padding:1px 0 0;flex:1;background:#fff;border:1px solid #8c9aa5}
.tree li{height:16px;display:flex;align-items:center;padding-left:23px;position:relative;white-space:nowrap}
.tree li>span:last-child{margin-left:5px}
.tree li>.dots{position:absolute;left:20px;top:7px;width:3px;border-top:1px dotted #777;margin:0}
.ar{position:absolute;left:7px;top:4px;width:7px;height:7px;border-top:2px solid #aaa;border-right:2px solid #aaa;transform:rotate(45deg)}
.ar.open{left:8px;top:2px;border-color:#555;transform:rotate(135deg)}
.tree li.sub{padding-left:43px}
.tree li.sub::before{content:"";position:absolute;left:12px;top:0;height:16px;border-left:1px dotted #777}
.tree li.sub>.dots{left:31px;width:12px}
.tree li.sub>.dots::before{content:"";position:absolute;left:0;top:-8px;height:8px;border-left:1px dotted #777}
.tree li.sub>span:last-child{margin-left:4px}
.seltxt{background:#d6d6d6;padding-left:2px;padding-right:4px;line-height:16px}
.tree li.sub>.seltxt{margin-left:2px}
.selic{background:#d6d6d6;box-shadow:2px 0 0 #d6d6d6,-2px 0 0 #d6d6d6}

.mtools{height:27px;background:#fff;display:flex;align-items:center;padding-left:6px;border-bottom:1px solid #c8c8c8;flex:none}
.mtools .it{gap:4px}
.delx{width:14px;height:14px;margin-left:7px}
.cpy{margin-left:10px}
.flt{margin-left:5px}
.search{height:28px;display:flex;align-items:center;padding-left:2px;flex:none}
.sinput{width:288px;height:24px;border:2px solid #777;border-width:1px 2px 2px 1px;padding:0 2px;font:inherit;background:#fff;outline:none}
.sinput::placeholder{color:#888}
.sfind{margin-left:3px}
.listpanel{height:224px;margin-left:2px;margin-right:2px;background:#fff;border:1px solid #bbb;border-right-width:2px;padding:1px;flex:none}
.lrow{display:flex}
.lnum{width:25px;text-align:center;flex:none}
.lname{flex:1}
.lhead{height:21px;border-bottom:1px solid #bbb}
.lhead .lnum{background:linear-gradient(#fff,#e6e6e6)}
.lhead .lname{background:linear-gradient(#f9d9a0,#f2bc60);text-align:center;color:#5a0a78;line-height:20px}
.lbody{height:18px;border-bottom:1px solid #bbb}
.lnum.on{background:#fbd48c;color:#5a0a78;font-size:11px}
.lname.on{background:#d6e8f8;padding-left:20px;line-height:20px}
.second{margin-top:8px}
.proppanel{height:303px;margin-top:2px;margin-left:2px;margin-right:1px;background:#fff;border:1px solid #bbb;border-right-width:2px;border-bottom-width:2px;padding:1px}
.props{border-collapse:collapse;table-layout:fixed;width:178px}
.props td,.props th{border:1px solid #c0c0c0;height:21px;padding:0;font-weight:400;overflow:hidden;white-space:nowrap}
.props td:first-child{width:83px;padding-left:19px}
.props th:first-child{width:83px;padding-left:1px;text-align:left;background:linear-gradient(#fff,#ececec)}
.hv{width:64px;text-align:left;padding-left:1px!important;background:linear-gradient(#f9d9a0,#f2bc60);color:#5a0a78}
.ha{width:31px;text-align:left}
.props td:last-child{text-align:left;padding-left:2px}
.val{padding-left:2px!important}
.sel{background:#d6e8f8}
.blue td:first-child{color:#0000e6}
.gray td:first-child{color:#808080}
.gray .val{color:#808080}
.chk{width:13px;height:13px;background:#fff;border:1px solid #333;vertical-align:middle;flex:none}
.grp td{height:19px}
.props .grp td:first-child{padding-left:3px}
.exp{width:12px;height:12px;border:1px solid #bbb;line-height:10px;text-align:center;margin-right:4px;vertical-align:middle;font-size:12px}

/* right */
.tb2{height:32px;display:flex;align-items:center;padding:4px 0 0 4px;border-bottom:1px solid #ccc;flex:none}
.tb2 .gripv{margin-right:8px}
.tb2 .combo{margin-right:4px}
.tb2 .vsep{margin-right:4px}
.act{height:21px;background:#b9dcf5;border:1px solid #7cb8e8;padding-left:3px;gap:4px}
.b50{width:50px}.b74{width:74px}
.pk{margin-left:5px;gap:3px}
.gs{margin-left:5px}
.t1,.t2{gap:4px}
.t1{margin-left:1px}.t2{margin-left:7px}
.more{margin-left:auto;margin-right:5px;font-size:14px;line-height:14px;align-self:flex-start;margin-top:0;font-weight:700}
.tb3{height:27px;display:flex;align-items:center;padding-left:4px;border-bottom:1px solid #d0d0d0;flex:none}
.sel1{width:50px;margin-left:5px;gap:5px}
.d1{margin-left:3px}
.v1{margin-left:4px}
.l1{margin-left:2px}.l2{margin-left:6px}.l3{margin-left:6px;gap:4px}.l4{margin-left:2px}
.v2{margin-left:5px}
.work{height:536px;display:flex;flex:none;border-top:1px solid #f0f0f0}
.vtools{width:30px;display:flex;flex-direction:column;align-items:center;padding:3px 0 0 4px;flex:none;background:#f0f0f0}
.griph{display:block;width:22px;border-top:2px dotted #b4b4b4;height:2px;flex:none}
.vi{margin-top:4px}
.v8{margin-top:8px}.v7{margin-top:7px}.v6{margin-top:6px}
.hsep{display:block;width:24px;height:1px;background:#9a9a9a;margin-top:6px;flex:none}
.vt{text-align:center;line-height:12px;font-size:12px;margin-top:3px}
.vgap{height:135px;flex:none}
.lft{width:0;height:0;border-top:3px solid transparent;border-bottom:3px solid transparent;border-right:4px solid #222;margin-top:1px}
.mored{font-size:14px;font-weight:700;transform:rotate(90deg);line-height:14px;margin-top:8px}
.cad{flex:1;width:785px;height:535px;background:#000}
.gl path,.gl circle{stroke:#008000;fill:none}
.yl{fill:#ff0}
.bk{fill:#000}
.dk{stroke:#55645a;fill:none}
.wh{fill:#fff;stroke:#f00}
.rd{stroke:#f00;fill:none}
.tg text{fill:#ccc;font:12px "Liberation Sans",sans-serif;text-anchor:middle}
.dl text{fill:#c4c4c4;font:16px "Liberation Sans",sans-serif;text-anchor:middle}
.gr2{stroke:#0f0;stroke-width:3;fill:none}
.grf{fill:#0f0}
.rd2{stroke:#f00;stroke-width:3;fill:none}
.rdf{fill:#f00}
.bl{fill:#0a6cff}
.rdt{stroke:#f00;fill:none}
.grt{stroke:#0a0;fill:none}
.blt{stroke:#1a6cff;fill:none}

.tbb{height:30px;display:flex;flex:none;border-top:1px solid #f0f0f0;padding-left:4px}
.tbbl{width:411px;display:flex;align-items:center;border-right:1px solid #ccc;border-bottom:1px solid #ccc;height:29px;flex:none}
.tbbl .gripv{margin-right:7px}
.tbbl .cv{background:#f0f0f0;border:1px solid #ddd;border-right:0;padding-left:2px;line-height:18px}
.x2{margin-left:2px}.x3{margin-left:3px}.x4{margin-left:4px}.x5{margin-left:5px}.x8{margin-left:8px}
.lab{white-space:nowrap;flex:none}
.num{width:42px;height:20px;background:#ececec;border:1px solid #e0e0e0;text-align:right;padding-right:4px;line-height:18px;color:#888;flex:none}
.spin{width:13px;height:20px;display:flex;flex-direction:column;background:#f4f4f4;border:1px solid #ddd;flex:none}
.spin i{flex:1;position:relative}
.spin i::before{content:"";position:absolute;left:3px;top:2px;border-left:3px solid transparent;border-right:3px solid transparent;border-bottom:4px solid #888}
.spin i+i::before{border-bottom:0;border-top:4px solid #888}
.tbbr{width:316px;margin-left:65px;display:flex;align-items:center;height:29px;background:#f4f4f4;border-bottom:1px solid #ccc;flex:none}
.r1{margin-left:8px}.r2{margin-left:8px}.r5{margin-left:5px}.r3{width:50px}
.r3a{margin-left:5px}
.r2a{margin-left:3px}

/* status */
.status{height:22px;display:flex;border-top:1px solid #d8d8d8;background:#f0f0f0}
.st{height:18px;margin-top:2px;padding-left:1px;border-right:1px solid #d8d8d8;flex:none;line-height:17px;white-space:nowrap}
.s148{width:149px}.s80{width:81px}.s130{width:130px}.s50{width:50px}.s251{width:251px}.s485{width:485px}.s70{width:70px}

/* taskbar */
.taskbar{height:40px;background:#000a10;display:flex;align-items:center;color:#fff}
.start{width:48px;height:40px;background:#000;display:flex;align-items:center;justify-content:center;flex:none}
.win{width:16px;height:16px}
.tsearch{width:344px;height:40px;background:#333;display:flex;align-items:center;padding-left:11px;flex:none}
.ring{width:19px;height:19px;border-radius:50%;border:2.500px solid #d8d8d8;flex:none}
.stext{margin-left:6px;color:#969696;font-size:14px;white-space:nowrap}
.mic{width:12px;height:18px;margin-left:114px}
.tk{height:40px;display:flex;align-items:center;justify-content:center;flex:none}
.tk.tv{width:49px}
.t50{width:50px}.t52{width:52px}.t42{width:42px}.t43{width:43px}.t40{width:40px}
.t20{width:20px;height:20px}.t22{width:24px;height:24px}.t26{width:26px;height:26px}
.run{border-bottom:2px solid #76b9ed;background-clip:padding-box}
.active{background:#3a3f42}
.tlink{margin-left:11px;color:#ddd;flex:none}
.tcpu{display:flex;flex-direction:column;align-items:center;line-height:20px;margin-left:20px;width:48px;color:#eee;white-space:nowrap;flex:none}
.tray{display:flex;align-items:center;margin-left:18px;flex:none}
.tr1{width:14px;height:8px}
.tr2{width:16px;height:14px;margin-left:10px}
.tr3{width:16px;height:16px;margin-left:9px}
.tr4{width:16px;height:16px;margin-left:7px}
.tr5{width:22px;height:16px;margin-left:7px}
.tzh{margin-left:11px;font-size:13px}
.tr6{width:14px;height:18px;margin-left:15px}
.clock{display:flex;flex-direction:column;align-items:center;margin-left:17px;width:60px;line-height:20px;color:#eee;flex:none}
.notif{position:relative;width:30px;margin-left:18px;flex:none}
.tr7{width:16px;height:16px}
.nbadge{position:absolute;left:7px;top:7px;width:16px;height:16px;border-radius:50%;background:#444;border:1px solid #ccc;text-align:center;line-height:14px;font-size:11px}

/* floats */
.sogou{position:absolute;left:702px;top:0;display:flex;align-items:flex-start}
.slogo{width:27px;height:27px;position:relative;z-index:1}
.sbar{height:23px;margin-top:3px;margin-left:-3px;width:182px;background:#fff;border:1px solid #b9c9e0;display:flex;align-items:center;padding-left:6px;gap:6px}
.szh{color:#1b75c9;font-size:14px;width:14px}
.sq{color:#1b75c9;width:12px;font-size:13px;line-height:12px}
.s20{width:16px;height:16px}
.badge{position:absolute;left:1041px;top:-30px;width:48px;height:48px;border-radius:50%;background:linear-gradient(#8fe08f,#25a83c);border:2px solid #e8efe8;box-shadow:0 2px 4px #999;color:#fff;font-weight:700;font-size:11px;text-align:center;padding-top:29px;line-height:14px}
.dialog{position:absolute;left:524px;top:304px;width:318px;height:157px;background:#f0f0f0;border:1px solid #3a96f0;box-shadow:0 0 18px rgba(0,0,0,.35);display:flex;flex-direction:column}
.dtitle{height:25px;background:#fff;display:flex;align-items:center;justify-content:space-between;padding:0 9px 3px 3px}
.dx{width:12px;height:12px;margin-top:3px}
.dbody{flex:1;padding:27px 24px 8px 14px;display:flex;flex-direction:column;justify-content:space-between}
.drow{display:flex;align-items:center}
.dlab{width:66px;white-space:nowrap}
.dsel{width:212px;height:21px;background:#e1e1e1;border:1px solid #adadad;display:flex;align-items:center;justify-content:space-between;padding:0 3px;line-height:19px}
.dfoot{display:flex;align-items:center}
.dkeep{margin-left:3px;white-space:nowrap}
.dbtn{width:72px;height:23px;background:#e1e1e1;border:1px solid #adadad;font:inherit;padding:0;color:#111}
.b1{margin-left:54px}
.b2{margin-left:15px}
.mark{position:absolute;border-style:solid;border-color:#f00;background:transparent}
.mark1{left:490px;top:276px;width:231px;height:133px;border-width:7px 8px 7px 7px}
.mark2{left:942px;top:324px;width:243px;height:139px;border-width:6px}
```
